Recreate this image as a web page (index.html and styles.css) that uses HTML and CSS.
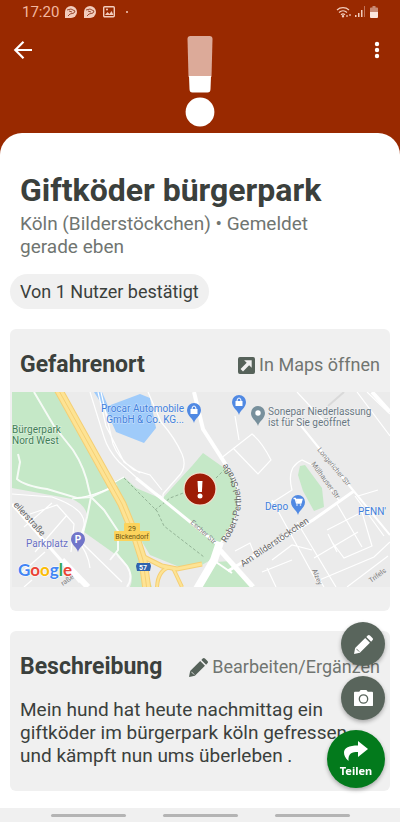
FILE: index.html
```html
<!DOCTYPE html>
<html lang="de">
<head>
  <meta charset="UTF-8" />
  <meta name="viewport" content="width=device-width, initial-scale=1" />
  <title>Giftköder bürgerpark</title>
  <link rel="stylesheet" href="styles.css">
</head>
<body>

  <!-- Status bar -->
  <div class="status-bar">
    <div class="status-left">
      <span class="time">17:20</span>
      <svg class="status-icon" viewBox="0 0 14 14">
        <path d="M1 13V7a6 6 0 1 1 6 6z" fill="#f3cdbd"/>
        <path d="M3 5l4-1 4 2-1 2-4 1-2 2M5 6l3 1" fill="none" stroke="#9a4a30" stroke-width="1"/>
      </svg>
      <svg class="status-icon" viewBox="0 0 14 14">
        <path d="M1 13V7a6 6 0 1 1 6 6z" fill="#f3cdbd"/>
        <path d="M3 5l4-1 4 2-1 2-4 1-2 2M5 6l3 1" fill="none" stroke="#9a4a30" stroke-width="1"/>
      </svg>
      <svg class="status-icon" viewBox="0 0 14 14">
        <rect x="1.7" y="1.7" width="10.6" height="10" rx="1" fill="none" stroke="#f3cdbd" stroke-width="1.4"/>
        <path d="M3 10l2.500-3 2 2 2-3 2 4z" fill="#f3cdbd"/>
        <circle cx="5" cy="4.500" r="1" fill="#f3cdbd"/>
      </svg>
      <span class="status-dot"></span>
    </div>
    <div class="status-right">
      <svg class="wifi" viewBox="0 0 16 14" fill="none" stroke="#f3cdbd" stroke-width="1.200">
        <path d="M1 5a9 9 0 0 1 12 0M3 7.500a6 6 0 0 1 8 0M5 9.700a3 3 0 0 1 4 0"/>
        <circle cx="7" cy="11.300" r=".6"/>
        <path d="M11 10v2M14 9v2"/>
      </svg>
      <svg class="signal" viewBox="0 0 12 14">
        <path d="M1 10h1.500v2H1zM4 8h1.500v4H4zM7 5h1.500v7H7z" fill="#f3cdbd"/>
        <path d="M10 1h1v11h-1z" fill="#c27258"/>
      </svg>
      <svg class="battery" viewBox="0 0 8 14">
        <path d="M2.500 1h3v1.500H7a1 1 0 0 1 1 1V7H0V3.500a1 1 0 0 1 1-1h1.500z" fill="#c98a75"/>
        <path d="M0 7h8v5a1 1 0 0 1-1 1H1a1 1 0 0 1-1-1z" fill="#fbe6de"/>
      </svg>
    </div>
  </div>

  <!-- Top bar with warning level -->
  <header class="top-bar">
    <button class="icon-btn" aria-label="Zurück">
      <svg viewBox="0 0 24 24" fill="none" stroke="#fff" stroke-width="2.200"><path d="M21 12H5M12.500 3.800L4.300 12l8.200 8.200"/></svg>
    </button>
    <svg class="level" viewBox="0 0 30 92">
      <path d="M5.500 0h19q3 0 3 3l-1 38h-23L2.500 3q0-3 3-3z" fill="#dcaa99"/>
      <path d="M4 40h22l-.5 13q0 3.500-3 3.500h-15q-3 0-3-3.500z" fill="#fff"/>
      <circle cx="15" cy="76" r="14.400" fill="#fff"/>
    </svg>
    <button class="icon-btn" aria-label="Mehr">
      <svg viewBox="0 0 24 24" fill="#fff"><circle cx="12" cy="6" r="2.200"/><circle cx="12" cy="12" r="2.200"/><circle cx="12" cy="18" r="2.200"/></svg>
    </button>
  </header>

  <!-- Content sheet -->
  <main class="sheet">
    <div class="intro">
      <h1>Giftköder bürgerpark</h1>
      <p class="meta">Köln (Bilderstöckchen) • Gemeldet gerade eben</p>
    </div>
    <span class="chip">Von 1 Nutzer bestätigt</span>

    <section class="card">
      <div class="card-header">
        <h2>Gefahrenort</h2>
        <a class="card-action" href="#maps">
          <svg class="open-icon" viewBox="0 0 18 18">
            <rect width="18" height="18" rx="2" fill="#56625a"/>
            <path d="M6.500 3.500h8v8l-2.700-2.700-6.500 6.500-2.600-2.600 6.500-6.500z" fill="#f0f0f0"/>
          </svg>
          In Maps öffnen
        </a>
      </div>

      <svg class="map" viewBox="0 0 378 195">
        <rect width="378" height="195" fill="#ebebeb"/>

        <!-- parks -->
        <g fill="#c5e8c7">
          <path d="M0 0H47L105 103 140 195H118Q124 182 110 167L72 140 75 122Q72 112 60 107L0 96z"/>
          <path d="M103 89L112 85 124 96 150 107 168 87 180 74 191 61 208 73 215 78Q230 99 225 122 219 142 204 154V165L188 174H165L138 163 118 130z"/>
          <path d="M190 195L204 170 219 169 242 195z"/>
          <path d="M288 74L293 73 310 96 312 115 302 119 291 99 286 83z"/>
        </g>

        <!-- lake -->
        <path d="M82 0H90L96 14 128 2 138 6 144 36 132 51 104 40 96 22z" fill="#9fcbfa"/>

        <!-- minor roads -->
        <g fill="none" stroke="#fff" stroke-width="1.200">
          <path d="M78 0L92 45Q96 58 107 70L125 86 136 96 150 105M89 0L101 52Q106 66 122 78L138 83 150 98M86 0L94 34 112 70 128 81"/>
          <path d="M136 0L149 30Q163 46 170 62 176 76 165 86L151 102"/>
          <path d="M151 102V107M208 67L240 42Q250 50 259 68L246 82 221 56M223 24L227 48"/>
          <path d="M60 107Q80 105 105 93M112 85L103 90"/>
          <path d="M0 102L40 105Q75 117 72 134L67 148 110 190M65 148Q76 160 78 176M18 122L45 113 62 132 59 160M12 135L40 111M23 160L55 123M8 182L33 160M12 195L20 188"/>
          <path d="M223 159L238 151 244 166M258 112L280 98Q274 75 290 68L302 74 328 110M260 108L305 190M285 130L324 195M260 168L280 153 300 158M264 195L255 176M315 138L350 120 360 154 332 166 320 150M316 142L325 160M302 166L346 140M305 189L362 165 378 150M325 112L350 155M343 104L372 144M346 104L366 98M335 195L376 164M306 185L312 195M250 180L280 168"/>
          <path d="M311 28L285 0M345 0L378 44M355 0L378 22"/>
        </g>
        <path d="M316 14L332 0" stroke="#d9d9d9" stroke-width="2"/>

        <!-- park paths -->
        <g fill="none" stroke="#fff" stroke-width="2" opacity=".85">
          <path d="M22 0L42 34 61 58Q73 76 77 98L79 105 75 125 70 145"/>
          <path d="M6 62L8 70 5 87Q13 94 35 97L65 106 79 105 103 94"/>
          <path d="M79 105L92 118 106 139V158L98 168M104 161L115 174Q122 185 115 195"/>
        </g>
        <g fill="none" stroke="#94b497" stroke-width="1" stroke-dasharray="3 2">
          <path d="M112 86L145 119 152 134 192 165"/>
          <path d="M143 118L158 106 174 100M204 86L214 76"/>
        </g>

        <!-- larger roads -->
        <g fill="none" stroke="#fff">
          <path d="M124 86L150 107 204 151" stroke-width="3"/>
          <path d="M182 0L191 37 216 76" stroke-width="4"/>
          <path d="M216 76Q233 100 222 130L207 154" stroke-width="2"/>
          <path d="M208 150L202 168 185 197" stroke-width="8"/>
          <path d="M207 157L241 195" stroke-width="5"/>
          <path d="M216 179L301 128 342 99" stroke-width="3"/>
          <path d="M286 30L340 97 378 143" stroke-width="2"/>
          <path d="M0 112L68 190" stroke-width="3"/>
          <path d="M50 168L76 195" stroke-width="6"/>
          <path d="M360 0L378 20" stroke-width="4"/>
        </g>
        <path d="M204 170L220 181" stroke="#fff" stroke-width="2"/>

        <!-- motorway -->
        <g fill="none" stroke="#f5cf74">
          <path d="M130 164L150 174 165 177 190 172" stroke-width="5"/>
          <path d="M145 195Q146 178 158 175M161 176L170 195" stroke-width="4"/>
          <path d="M46 -3L110 112 124 146 131 168 135 198" stroke-width="9"/>
        </g>
        <g fill="none" stroke="#fde394">
          <path d="M130 164L150 174 165 177 190 172" stroke-width="3"/>
          <path d="M145 195Q146 178 158 175M161 176L170 195" stroke-width="2"/>
          <path d="M46 -3L110 112 124 146 131 168 135 198" stroke-width="7"/>
        </g>
        <path d="M46 -3L110 112 124 146 131 168 135 198" fill="none" stroke="#f5cf74" stroke-width="1"/>

        <!-- place labels -->
        <g class="label green">
          <text x="0" y="41">Bürgerpark</text>
          <text x="0" y="52">Nord West</text>
        </g>
        <g class="label blue">
          <text x="172" y="20" text-anchor="end">Procar Automobile</text>
          <text x="172" y="31" text-anchor="end">GmbH &amp; Co. KG...</text>
          <text x="253" y="118">Depo</text>
          <text x="346" y="123">PENN'</text>
        </g>
        <g class="label grey">
          <text x="256" y="23">Sonepar Niederlassung</text>
          <text x="256" y="34">ist für Sie geöffnet</text>
        </g>
        <text class="label purple" x="14" y="155">Parkplatz</text>

        <!-- street labels -->
        <path id="robert" d="M214 151Q228 130 229 110 229 92 215 72" fill="none"/>
        <g class="street">
          <text><textPath href="#robert">Robert-Perthel-Straße</textPath></text>
          <text transform="translate(231 175) rotate(-34)">Am Bilderstöckchen</text>
          <text transform="translate(1 113) rotate(48)">eilerstraße</text>
        </g>
        <g class="street small">
          <text transform="translate(305 58) rotate(50)">Longericher Str</text>
          <text transform="translate(299 72) rotate(54)">Mülhauser Str</text>
          <text transform="translate(178 131) rotate(42)">Escher Str</text>
          <text transform="translate(300 178) rotate(68)">Alzey</text>
          <text transform="translate(359 191) rotate(-36)">Trifels</text>
          <text transform="translate(51 194) rotate(-36)">raße</text>
        </g>

        <!-- road signs -->
        <rect x="112" y="131" width="16" height="11" rx="1" fill="#fbd35c"/>
        <rect x="102" y="139" width="36" height="10" rx="1" fill="#fbd35c"/>
        <text class="sign" x="120" y="139">29</text>
        <text class="sign" x="120" y="147">Bickendorf</text>
        <path d="M125 171h13l1 3-1 5h-13l-1-5z" fill="#2f62ad"/>
        <text class="sign white" x="131" y="178">57</text>

        <!-- pins -->
        <defs>
          <path id="pin" d="M0 0C-1-5-7-7-7-13a7 7 0 0 1 14 0C7-7 1-5 0 0z"/>
        </defs>
        <use href="#pin" x="182" y="31" fill="#5089e3"/>
        <path d="M178.500 17h7v5h-7z" fill="#fff"/>
        <path d="M180 17q0-3 2-3t2 3" fill="none" stroke="#fff"/>
        <use href="#pin" x="227" y="23" fill="#5089e3"/>
        <path d="M223.500 9h7v5h-7z" fill="#fff"/>
        <path d="M225 9q0-3 2-3t2 3" fill="none" stroke="#fff"/>
        <use href="#pin" x="246" y="34" fill="#78909c"/>
        <circle cx="246" cy="21" r="2.700" fill="#fff"/>
        <use href="#pin" x="286" y="123" fill="#5089e3"/>
        <path d="M281.500 106.500h1.800l1.200 4.500h4.500l1-3.500h-6" fill="none" stroke="#fff" stroke-width="1.300"/>
        <path d="M284 108h6l-1 3h-4z" fill="#fff"/>
        <circle cx="285" cy="113" r=".8" fill="#fff"/><circle cx="288.500" cy="113" r=".8" fill="#fff"/>
        <use href="#pin" x="66" y="160" fill="#7175c9"/>
        <text class="pin-letter" x="66" y="151">P</text>

        <!-- danger marker -->
        <circle cx="188" cy="97" r="16" fill="#9d1c06" stroke="#f6dfce" stroke-width="1.200"/>
        <path d="M185.500 89h5l-.6 11h-3.800z" fill="#fff"/>
        <circle cx="188" cy="104" r="2.500" fill="#fff"/>

        <text class="google" x="6" y="184"><tspan fill="#4285f4">G</tspan><tspan fill="#ea4335">o</tspan><tspan fill="#fbbc05">o</tspan><tspan fill="#4285f4">g</tspan><tspan fill="#34a853">l</tspan><tspan fill="#ea4335">e</tspan></text>
      </svg>
    </section>

    <section class="card">
      <div class="card-header">
        <h2>Beschreibung</h2>
        <a class="card-action" href="#edit">
          <svg class="edit-icon" viewBox="0 0 20 20" fill="#56625a"><path d="M0 20l1.200-6.200L11.800 3.200l5 5L6.200 18.800zM13 2l1.400-1.400q1.200-1.200 2.400 0l2.600 2.600q1.200 1.200 0 2.400L18 7z"/><path d="M2.500 14.500l3 3" fill="none" stroke="#f0f0f0" stroke-width=".9"/></svg>
          Bearbeiten/Ergänzen
        </a>
      </div>
      <p class="description">Mein hund hat heute nachmittag ein giftköder im bürgerpark köln gefressen und kämpft nun ums überleben .</p>
    </section>
  </main>

  <!-- Floating buttons -->
  <div class="fabs">
    <button class="fab" aria-label="Bearbeiten">
      <svg viewBox="0 0 20 20" fill="#fff"><path d="M0 20l1.200-6.200L11.800 3.200l5 5L6.200 18.800zM13 2l1.400-1.400q1.200-1.200 2.400 0l2.600 2.600q1.200 1.200 0 2.400L18 7z"/><path d="M2.500 14.500l3 3" fill="none" stroke="#59655c" stroke-width=".9"/></svg>
    </button>
    <button class="fab" aria-label="Foto hinzufügen">
      <svg viewBox="2 2 20 20"><path d="M9 3L7.500 5H3a1 1 0 0 0-1 1v13a1 1 0 0 0 1 1h18a1 1 0 0 0 1-1V6a1 1 0 0 0-1-1h-4.500L15 3z" fill="#fff"/><circle cx="12" cy="12.500" r="4.400" fill="none" stroke="#59655c" stroke-width="1.400"/></svg>
    </button>
    <button class="fab share">
      <svg viewBox="0 0 24 22" fill="#fff"><path d="M14 1l10 8-10 8v-5C8 12 4 13 4.500 21 1 18 0 15 0 12.500 0 8 5 5.500 14 5.500z"/></svg>
      Teilen
    </button>
  </div>

  <!-- Gesture bar -->
  <footer class="gesture-bar">
    <span></span><span></span><span></span>
  </footer>

</body>
</html>
```
FILE: styles.css
```css
* {
  box-sizing: border-box;
}

body {
  font-family: Roboto, "Liberation Sans", sans-serif;
  margin: 0;
  min-height: 100vh;
  display: flex;
  flex-direction: column;
  background: #992900;
  color: #3b403c;
}

h1, h2, p {
  margin: 0;
}

button {
  font-family: inherit;
  border: none;
  padding: 0;
  cursor: pointer;
}

/* Status bar */
.status-bar {
  display: flex;
  justify-content: space-between;
  align-items: center;
  height: 24px;
  padding: 0 22px;
  color: #f3b79f;
}

.status-left, .status-right {
  display: flex;
  align-items: center;
  gap: 5px;
}

.status-right {
  gap: 2px;
}

.time {
  font-size: 15px;
}

.status-icon {
  width: 14px;
  height: 14px;
}

.status-dot {
  width: 2px;
  height: 2px;
  margin-left: 5px;
  border-radius: 50%;
  background: #f3cdbd;
}

.wifi {
  width: 16px;
  height: 14px;
}

.signal {
  width: 12px;
  height: 14px;
  margin-right: 2px;
}

.battery {
  width: 8px;
  height: 14px;
}

/* Top bar */
.top-bar {
  display: flex;
  justify-content: space-between;
  align-items: flex-start;
  padding: 12px 11px 5px;
}

.icon-btn {
  width: 24px;
  height: 28px;
  display: flex;
  align-items: center;
  background: none;
}

.icon-btn svg {
  width: 24px;
  height: 24px;
}

.level {
  width: 30px;
  height: 92px;
}

/* Sheet */
.sheet {
  flex: 1;
  padding: 36px 10px 17px;
  background: #fff;
  border-radius: 22px 22px 0 0;
}

.intro {
  padding: 0 10px;
}

h1 {
  font-size: 32px;
  line-height: 43px;
}

.meta {
  font-size: 19px;
  line-height: 23px;
  padding-right: 40px;
  color: #707571;
}

.chip {
  display: inline-block;
  margin-top: 16px;
  padding: 0 10px;
  font-size: 18px;
  line-height: 35px;
  border-radius: 18px;
  background: #f0f0f0;
}

/* Cards */
.card {
  margin-top: 20px;
  padding: 24px 0;
  border-radius: 6px;
  background: #f0f0f0;
}

.card-header {
  display: flex;
  justify-content: space-between;
  align-items: center;
  padding: 0 10px;
  margin-bottom: 15px;
}

h2 {
  font-size: 23px;
  line-height: 24px;
}

.card-action {
  display: flex;
  align-items: center;
  gap: 4px;
  font-size: 18px;
  line-height: 24px;
  color: #707571;
  text-decoration: none;
}

.open-icon {
  width: 17px;
  height: 17px;
}

.edit-icon {
  width: 19px;
  height: 19px;
}

.description {
  padding: 4px 10px 0;
  font-size: 19px;
  line-height: 23px;
}

/* Map */
.map {
  display: block;
  width: 100%;
  padding-left: 2px;
}

.label {
  font-size: 10px;
  stroke: #fff;
  stroke-width: 1px;
  stroke-opacity: 0.5;
  paint-order: stroke;
}

.green { fill: #3f7d55; }
.blue { fill: #3f7fdc; }
.grey { fill: #687782; }
.purple { fill: #696fc4; }

.street {
  font-size: 9px;
  fill: #666;
}

.street.small {
  font-size: 7px;
  fill: #808080;
}

.sign {
  font-size: 7px;
  text-anchor: middle;
  fill: #6b5412;
}

.sign.white {
  font-weight: bold;
  fill: #fff;
}

.pin-letter {
  font-size: 10px;
  font-weight: bold;
  text-anchor: middle;
  fill: #fff;
}

.google {
  font-family: Lato, sans-serif;
  font-size: 17px;
  font-weight: bold;
  stroke: #fff;
  stroke-width: 1px;
  paint-order: stroke;
}

/* Floating buttons */
.fabs {
  position: fixed;
  right: 15px;
  bottom: 34px;
  display: flex;
  flex-direction: column;
  align-items: flex-end;
  gap: 10px;
}

.fab {
  width: 44px;
  height: 44px;
  display: flex;
  flex-direction: column;
  justify-content: center;
  align-items: center;
  border-radius: 50%;
  background: #59655c;
  box-shadow: 0 2px 4px rgba(0,0,0,0.3);
}

.fab svg {
  width: 19px;
  height: 19px;
}

.fab.share {
  width: 58px;
  height: 58px;
  gap: 2px;
  font-family: "Noto Sans", sans-serif;
  font-size: 11px;
  line-height: 14px;
  font-weight: bold;
  color: #fff;
  background: #037a1c;
}

.fab.share svg {
  width: 24px;
  height: 22px;
}

/* Gesture bar */
.gesture-bar {
  display: flex;
  justify-content: center;
  align-items: center;
  gap: 37px;
  height: 14px;
  background: #f0f0f0;
}

.gesture-bar span {
  width: 75px;
  height: 3px;
  border-radius: 2px;
  background: #b4b4b4;
}
```
